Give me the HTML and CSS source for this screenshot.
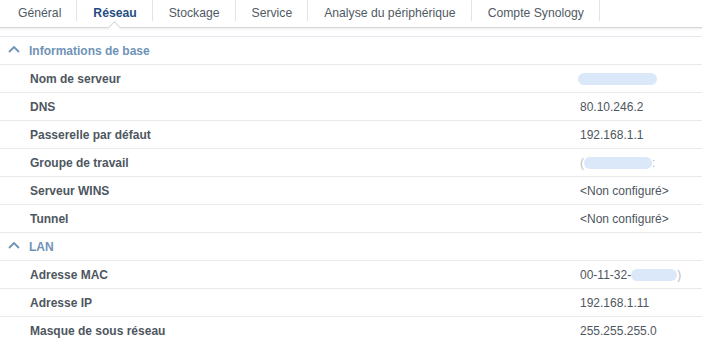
FILE: index.html
```html
<!DOCTYPE html>
<html lang="fr">
<head>
    <meta charset="UTF-8">
    <meta name="viewport" content="width=device-width, initial-scale=1.0">
    <title>Informations</title>
    <link rel="stylesheet" href="styles.css">
</head>
<body>
    <div class="tabs">
        <div class="tab">Général</div>
        <div class="tab active">Réseau</div>
        <div class="tab">Stockage</div>
        <div class="tab">Service</div>
        <div class="tab">Analyse du périphérique</div>
        <div class="tab">Compte Synology</div>
    </div>
    <div class="content">
        <div class="section">
            <svg class="chevron" width="12" height="8" viewBox="0 0 12 8"><polyline points="1,7 6,2 11,7" fill="none" stroke="#6f93b7" stroke-width="1.8"/></svg>
            Informations de base
        </div>
        <div class="row"><span class="label">Nom de serveur</span><span class="value"><span class="blur name"></span></span></div>
        <div class="row"><span class="label">DNS</span><span class="value">80.10.246.2</span></div>
        <div class="row"><span class="label">Passerelle par défaut</span><span class="value">192.168.1.1</span></div>
        <div class="row"><span class="label">Groupe de travail</span><span class="value"><span class="faint">(</span><span class="blur group"></span><span class="faint">:</span></span></div>
        <div class="row"><span class="label">Serveur WINS</span><span class="value">&lt;Non configuré&gt;</span></div>
        <div class="row"><span class="label">Tunnel</span><span class="value">&lt;Non configuré&gt;</span></div>
        <div class="section">
            <svg class="chevron" width="12" height="8" viewBox="0 0 12 8"><polyline points="1,7 6,2 11,7" fill="none" stroke="#6f93b7" stroke-width="1.8"/></svg>
            LAN
        </div>
        <div class="row"><span class="label">Adresse MAC</span><span class="value">00-11-32-<span class="blur mac"></span><span class="faint">)</span></span></div>
        <div class="row"><span class="label">Adresse IP</span><span class="value">192.168.1.11</span></div>
        <div class="row"><span class="label">Masque de sous réseau</span><span class="value">255.255.255.0</span></div>
    </div>
</body>
</html>
```

FILE: styles.css
```css
body {
    font-family: "Liberation Sans", Arial, sans-serif;
    font-size: 12px;
    color: #4e5660;
    background: #fff;
    margin: 0;
    padding: 0;
}
.tabs {
    display: flex;
    height: 27px;
    padding-left: 2px;
    border-bottom: 1px solid #d3d7db;
    box-shadow: 0 1px 2px rgba(0, 0, 0, 0.08);
}
.tab {
    position: relative;
    padding: 6px 16px 0 16px;
    font-size: 12.2px;
    color: #505a64;
}
.tab::after {
    content: "";
    position: absolute;
    right: 0;
    top: 0;
    height: 21px;
    border-right: 1px solid #dfe4e9;
}
.tab.active {
    color: #1f4d82;
    font-weight: bold;
}
.tab.active::before {
    content: "";
    position: absolute;
    left: 50%;
    bottom: -5px;
    width: 8px;
    height: 8px;
    margin-left: -5px;
    background: #fff;
    border-left: 1px solid #d3d7db;
    border-top: 1px solid #d3d7db;
    transform: rotate(45deg);
}
.content {
    margin-top: 8px;
    border-top: 1px solid #e3e9ef;
}
.section {
    display: flex;
    align-items: center;
    height: 27px;
    padding-left: 8px;
    gap: 9px;
    color: #6f93b7;
    font-weight: bold;
    border-bottom: 1px solid #e6eaee;
}
.chevron {
    margin-top: -3px;
}
.row {
    display: grid;
    grid-template-columns: 550px 1fr;
    align-items: center;
    height: 27px;
    padding-left: 30px;
    border-bottom: 1px solid #e6eaee;
}
.label {
    font-weight: bold;
    color: #4e5660;
}
.value {
    display: flex;
    align-items: center;
    color: #4e5660;
}
.blur {
    display: inline-block;
    height: 12px;
    background: #dbe8fa;
    border-radius: 6px;
}
.blur.name {
    width: 79px;
    margin-left: -2px;
}
.blur.group {
    width: 68px;
}
.blur.mac {
    width: 46px;
}
.faint {
    color: #b8bcc0;
}
```
